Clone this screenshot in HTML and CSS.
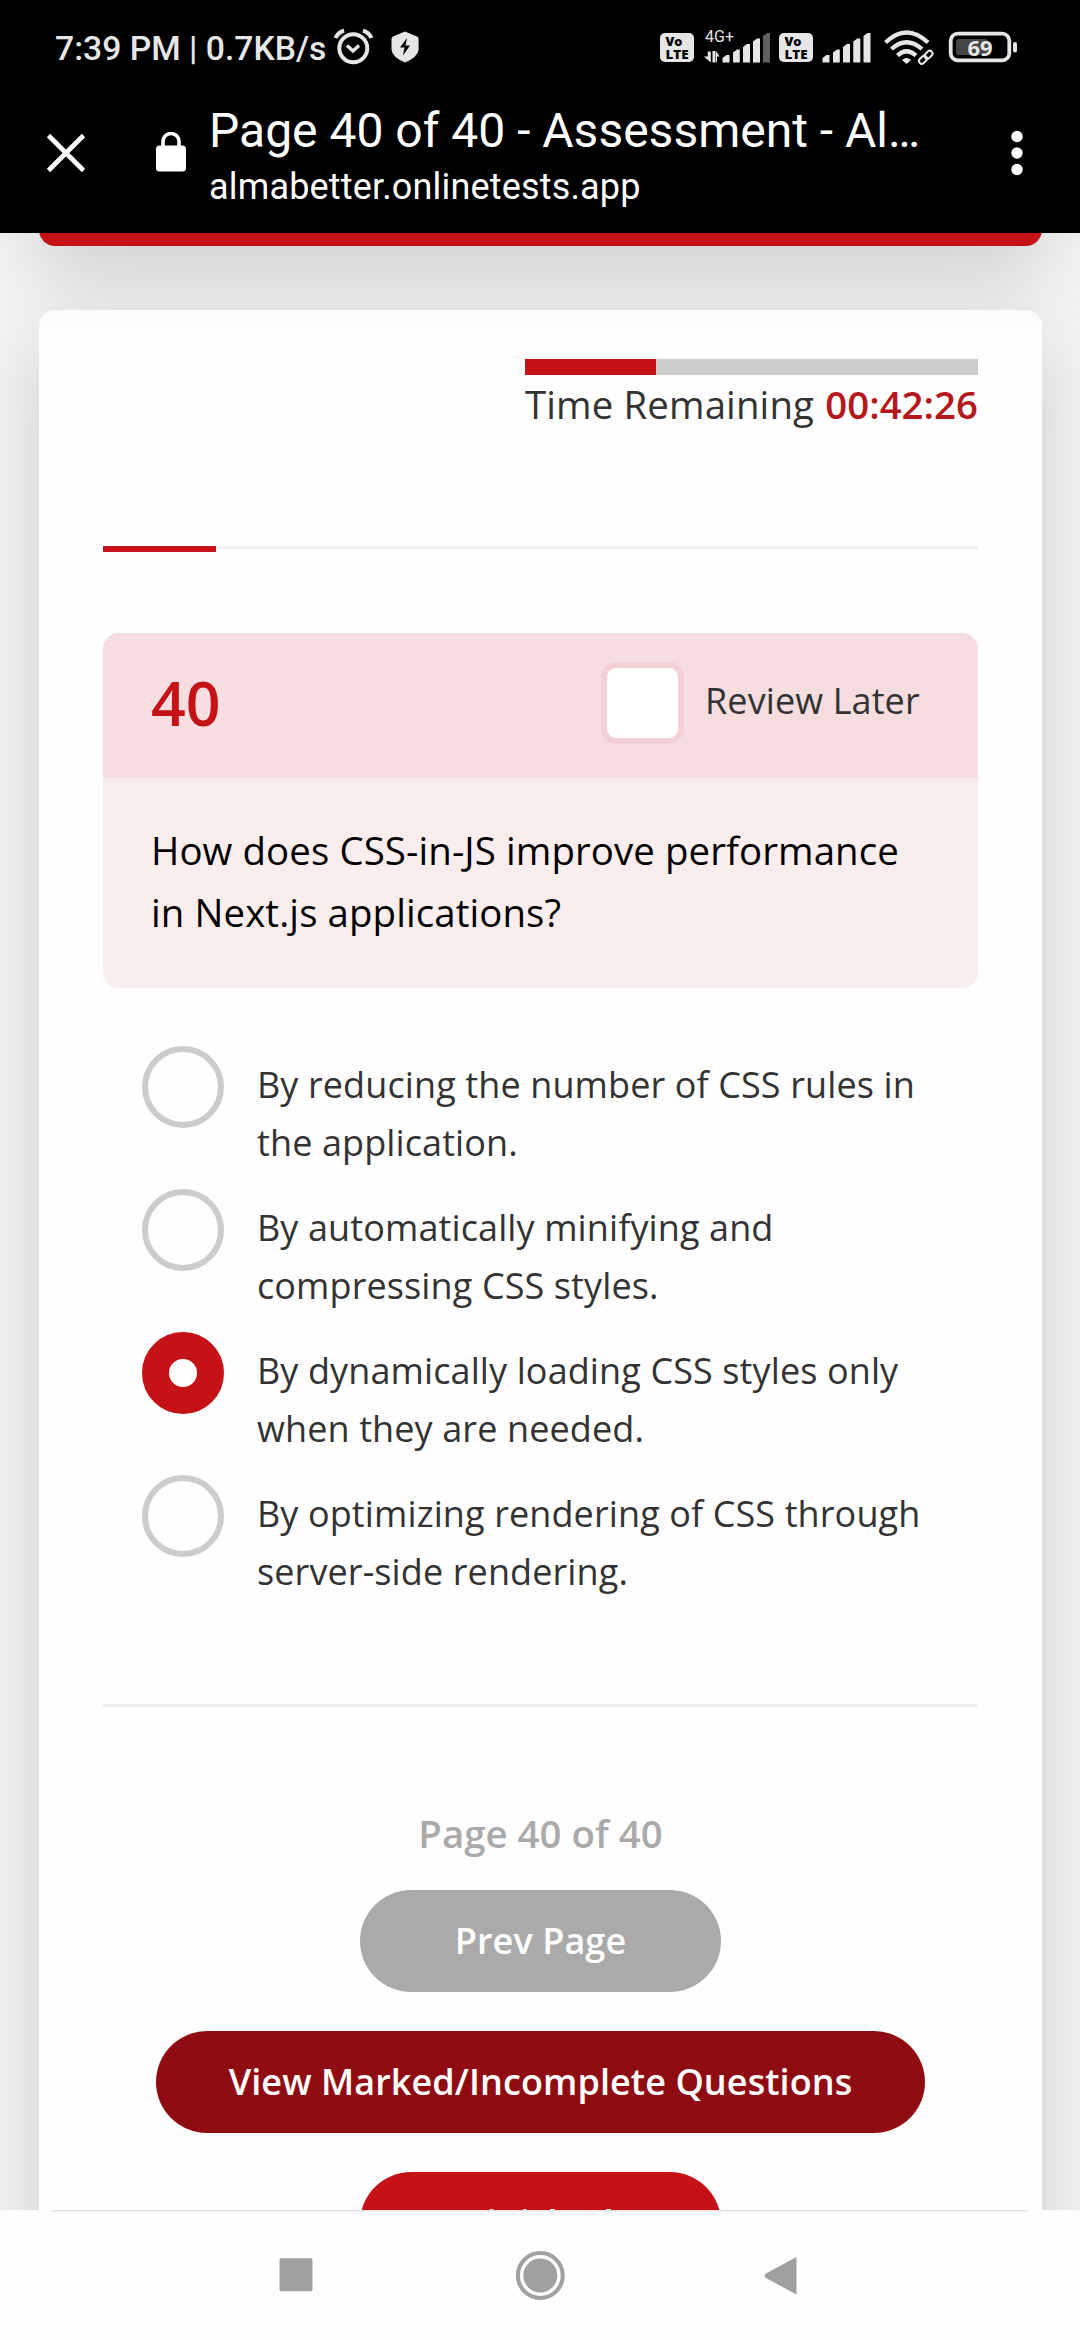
FILE: index.html
```html
<!DOCTYPE html>
<html lang="en">
<head>
<meta charset="utf-8">
<title>Page 40 of 40 - Assessment</title>
<link rel="stylesheet" href="styles.css">
</head>
<body>
<header class="top">
  <div class="status">
    <span class="clock">7:39 PM | 0.7KB/s</span>
    <svg class="ic-left" width="88" height="40" viewBox="332 28 88 40" fill="none">
      <g stroke="#e6e6e6" stroke-linecap="butt">
        <circle cx="353.3" cy="48.3" r="14" stroke-width="4"/>
        <path d="M347 45.5l6 5.5 6-5.5" stroke-width="3.4"/>
        <path d="M335.5 38Q338 32.500 344 30.500M371.500 38Q369 32.500 363 30.500" stroke-width="4"/>
      </g>
      <path d="M405 31.500L417 36.500Q418.600 37.300 418.600 39V49.500Q418 57 405 62.500Q392 57 391.500 49.500V39Q391.500 37.300 393 36.500Z" fill="#e6e6e6"/>
      <path d="M407 38L400 47.500H404.500L403 55.500L410 45.500H405.500Z" fill="#000"/>
    </svg>
    <svg class="ic-right" width="360" height="40" viewBox="658 28 360 40" fill="#e6e6e6">
      <g id="volte">
        <rect x="660" y="33" width="34" height="29" rx="5"/>
        <text class="volte" x="665.500" y="46" textLength="17" lengthAdjust="spacingAndGlyphs">Vo</text>
        <text class="volte" x="665.500" y="58.700" textLength="23" lengthAdjust="spacingAndGlyphs">LTE</text>
      </g>
      <text class="net" x="705" y="42" textLength="29">4G+</text>
      <path d="M707.800 51.500h3v11l-7-6h4zM712.500 51v11.500h3V51zM716 51.500v-.5l3.500 5.500h-2.500v5.500h-2V51z" />
      <path d="M722.500 62.500v-4.500l4-3h3v7.500zM733 62.500V52.500l4-3h2.800v13zM743 62.500V47l4-3h3v18.500zM753 62.500V41.500l4-3h3v24z"/>
      <path d="M763 62.500V36l4-3h3v29.500z" fill="#606060"/>
      <use href="#volte" x="119"/>
      <path d="M822.500 62.500v-4.500l4-3h3v7.500zM833 62.500V52.500l4-3h2.800v13zM843 62.500V47l4-3h3v18.500zM853.300 62.500V41.500l4-3h3v24zM863.500 62.500V36l4-3h3v29.500z"/>
      <g fill="none" stroke="#e6e6e6" stroke-width="4.300">
        <path d="M885.500 42.500Q906.500 22.500 928 42.500"/>
        <path d="M891.500 49Q906.500 35.500 922 49"/>
        <path d="M897.500 55.500Q906.500 47 916 55.500"/>
      </g>
      <path d="M902 60Q906.500 56 911 60L906.500 64Z"/>
      <g fill="none" stroke="#000" stroke-width="6"><rect x="918.500" y="57" width="9" height="5.500" rx="2.700" transform="rotate(-45 923 59.750)"/><rect x="924" y="52" width="9" height="5.500" rx="2.700" transform="rotate(-45 928.500 54.750)"/></g>
      <g fill="none" stroke="#e6e6e6" stroke-width="2"><rect x="918.500" y="57" width="9" height="5.500" rx="2.700" transform="rotate(-45 923 59.750)"/><rect x="924" y="52" width="9" height="5.500" rx="2.700" transform="rotate(-45 928.500 54.750)"/></g>
      <rect x="950.700" y="33.700" width="58.600" height="26.600" rx="7" fill="none" stroke="#e6e6e6" stroke-width="3.800"/>
      <rect x="956" y="39" width="32" height="16" rx="3" fill="#444"/>
      <rect x="1013" y="42" width="4" height="10.500" rx="2"/>
      <text class="batt" x="967.500" y="55.500" textLength="25">69</text>
    </svg>
  </div>
  <div class="bar">
    <svg class="close" width="40" height="40" viewBox="0 0 40 40" stroke="#fff" stroke-width="4.600"><path d="M2.500 2.500l35 35M37.500 2.500l-35 35"/></svg>
    <svg class="lock" width="30" height="40" viewBox="0 0 30 40"><rect y="13.500" width="30" height="26" rx="3.500" fill="#fff"/><path d="M7 15V9.500a8 8 0 0 1 16 0V15" fill="none" stroke="#fff" stroke-width="3.600"/></svg>
    <div class="titles">
      <div class="title">Page 40 of 40 - Assessment - Al…</div>
      <div class="url">almabetter.onlinetests.app</div>
    </div>
    <svg class="more" width="12" height="46" viewBox="0 0 12 46" fill="#fff"><circle cx="6" cy="6.500" r="5.700"/><circle cx="6" cy="23" r="5.700"/><circle cx="6" cy="39.500" r="5.700"/></svg>
  </div>
</header>
<main class="page">
  <div class="banner"></div>
  <section class="card">
    <div class="timer">
      <div class="track"><div class="elapsed"></div></div>
      <div class="remaining"><span>Time Remaining</span> <b>00:42:26</b></div>
    </div>
    <div class="progress"><div class="done"></div></div>
    <div class="question">
      <div class="qhead"><span class="num">40</span><span class="check"></span><span class="review">Review Later</span></div>
      <div class="qtext">How does CSS-in-JS improve performance<br>in Next.js applications?</div>
    </div>
    <div class="options">
      <div class="option"><span class="radio"></span><p>By reducing the number of CSS rules in<br>the application.</p></div>
      <div class="option"><span class="radio"></span><p>By automatically minifying and<br>compressing CSS styles.</p></div>
      <div class="option"><span class="radio on"></span><p>By dynamically loading CSS styles only<br>when they are needed.</p></div>
      <div class="option"><span class="radio"></span><p>By optimizing rendering of CSS through<br>server-side rendering.</p></div>
    </div>
    <div class="rule"></div>
    <div class="actions">
      <div class="pageno">Page 40 of 40</div>
      <div class="btn grey">Prev Page</div>
      <div class="btn dark">View Marked/Incomplete Questions</div>
      <div class="btn">Finished</div>
    </div>
  </section>
</main>
<nav class="nav">
  <svg width="1080" height="130" viewBox="0 2210 1080 130" fill="#a0a0a0">
    <path d="M51 2210.800H1028" stroke="#e2e2e2" stroke-width="1.600"/>
    <rect x="279.500" y="2258.300" width="33" height="33" rx="2"/>
    <circle cx="540.300" cy="2275.500" r="22.400" fill="none" stroke="#a0a0a0" stroke-width="4"/>
    <circle cx="540.300" cy="2275.500" r="17"/>
    <path d="M796.500 2257v37.500L766 2278Q763 2275.500 766 2273.500Z"/>
  </svg>
</nav>
</body>
</html>
```
FILE: styles.css
```css
* { box-sizing: border-box; }
body {
  margin: 0;
  width: 1080px;
  height: 2340px;
  overflow: hidden;
  display: flex;
  flex-direction: column;
  background: #fefefe;
  font-family: "Open Sans", sans-serif;
  color: #333;
}
svg { display: block; flex: none; }

.top { height: 233px; flex: none; background: #000; color: #fff; font-family: Roboto, sans-serif; white-space: nowrap; }
.status { display: flex; align-items: flex-start; height: 96px; padding: 28px 0 0 55px; color: #e6e6e6; }
.clock { width: 277px; font-size: 33.700px; font-weight: 500; line-height: 41px; }
.ic-right { margin-left: 238px; }
.volte { font: 800 12.500px "Open Sans", sans-serif; fill: #000; }
.net { font: 400 16px Roboto, sans-serif; }
.batt { font: 700 22px "Noto Sans", sans-serif; }
.bar { display: flex; height: 137px; }
.close { margin: 37px 0 0 46px; }
.lock { margin: 36px 0 0 70px; }
.titles { width: 731px; margin: 4px 0 0 23px; }
.title { font-size: 48px; line-height: 62px; }
.url { font-size: 36px; line-height: 50px; letter-spacing: .17px; }
.more { margin: 34px 0 0 71px; }

.page { height: 1977px; flex: none; overflow: hidden; padding: 0 38px 0 39px; background: #f3f3f3; }
.banner { height: 153px; margin-top: -140px; border-radius: 16px; background: #c41217; box-shadow: 0 30px 80px rgba(0, 0, 0, .15); }
.card {
  height: 2200px;
  margin-top: 64px;
  padding: 49px 64px 0;
  border-radius: 16px;
  background: linear-gradient(#fbfbfb, #fefefe 36px);
  box-shadow: 0 30px 80px rgba(0, 0, 0, .15);
}
.timer { width: 453px; height: 187px; margin-left: auto; }
.track { height: 16px; background: #ccc; }
.elapsed { width: 131px; height: 16px; background: #c41217; }
.remaining { display: flex; justify-content: space-between; font-size: 38.400px; line-height: 58px; white-space: nowrap; }
.remaining span { letter-spacing: .12px; }
.remaining b { color: #b5181c; font-weight: 600; }
.progress { height: 6px; background: linear-gradient(#eee 3px, transparent 3px); }
.done { width: 113px; height: 6px; background: #c41217; }

.question { margin-top: 81px; height: 355px; border-radius: 16px; overflow: hidden; background: #faeded; }
.qhead { display: flex; height: 145px; padding: 29px 57px 0 48px; background: #f6dee0; }
.num { width: 450px; font-size: 60.800px; font-weight: 600; line-height: 82px; color: #c41217; }
.check { width: 83px; height: 82px; border: 6px solid #f2d0d3; border-radius: 15px; background: #fff; }
.review { margin-left: 21px; font-size: 36px; line-height: 78px; letter-spacing: .1px; white-space: nowrap; }
.qtext { padding: 42px 0 0 48px; font-size: 38.400px; line-height: 61.900px; letter-spacing: .1px; color: #000; white-space: nowrap; }

.options { padding: 58px 0 0 39px; }
.option { display: flex; gap: 33px; height: 143px; }
.radio { flex: none; width: 82px; height: 82px; border: 6px solid #ccc; border-radius: 50%; }
.radio.on { border: 27px solid #c41217; }
.option p { margin: 10px 0 0; font-size: 36px; line-height: 57.600px; letter-spacing: .11px; white-space: nowrap; }
.rule { height: 3px; margin-top: 86px; background: #eee; }

.actions { display: flex; flex-direction: column; align-items: center; padding-top: 96px; }
.pageno { font-size: 38.400px; font-weight: 600; line-height: 60px; color: #aaa; margin-bottom: 27px; }
.btn { flex: none; min-width: 361px; height: 102px; margin-bottom: 39px; padding: 0 72.500px; border-radius: 51px; background: #c41217; color: #fff; font-size: 36px; font-weight: 600; line-height: 102px; letter-spacing: .08px; text-align: center; white-space: nowrap; }
.grey { background: #aaa; }
.dark { background: #8f0d12; }
.nav { height: 130px; background: #fefefe; }
```
